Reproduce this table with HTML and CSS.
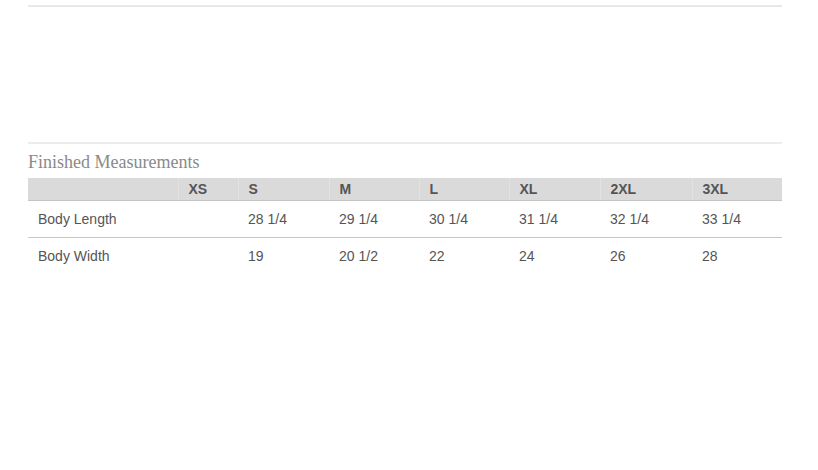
FILE: index.html
```html
<!DOCTYPE html>
<html>
<head>
<meta charset="utf-8">
<link rel="stylesheet" href="styles.css">
</head>
<body>
<div class="page">
  <div class="rule rule-top"></div>
  <div class="rule rule-mid"></div>
  <h2 class="title">Finished Measurements</h2>
  <table class="sizes">
    <colgroup>
      <col class="c-label"><col class="c-xs"><col class="c-s"><col class="c-m"><col class="c-l"><col class="c-xl"><col class="c-2xl"><col class="c-3xl">
    </colgroup>
    <thead>
      <tr><th></th><th>XS</th><th>S</th><th>M</th><th>L</th><th>XL</th><th>2XL</th><th>3XL</th></tr>
    </thead>
    <tbody>
      <tr><td>Body Length</td><td></td><td>28 1/4</td><td>29 1/4</td><td>30 1/4</td><td>31 1/4</td><td>32 1/4</td><td>33 1/4</td></tr>
      <tr><td>Body Width</td><td></td><td>19</td><td>20 1/2</td><td>22</td><td>24</td><td>26</td><td>28</td></tr>
    </tbody>
  </table>
</div>
</body>
</html>
```
FILE: styles.css
```css
html, body {
  margin: 0;
  padding: 0;
  background: #ffffff;
}
.page {
  margin-left: 28px;
  width: 754px;
  font-family: "Liberation Sans", Arial, sans-serif;
}
.rule {
  height: 2px;
  background: #e8e8e8;
}
.rule-top {
  margin-top: 5px;
}
.rule-mid {
  margin-top: 135px;
  background: #ececec;
}
.title {
  margin: 8px 0 6px 0;
  font-family: "Liberation Serif", "Times New Roman", serif;
  font-weight: normal;
  font-size: 18px;
  line-height: 20px;
  color: #8a8a8a;
}
.sizes {
  width: 754px;
  border-collapse: collapse;
  table-layout: fixed;
}
.c-label { width: 150px; }
.c-xs { width: 60px; }
.c-s { width: 91px; }
.c-m { width: 90px; }
.c-l { width: 90px; }
.c-xl { width: 91px; }
.c-2xl { width: 92px; }
.c-3xl { width: 90px; }
.sizes th {
  background: #dadada;
  height: 22px;
  padding: 0 10px;
  text-align: left;
  font-size: 14px;
  font-weight: bold;
  color: #555555;
  border-bottom: 1px solid #c4c4c4;
  border-left: 1px solid #e2e2e2;
}
.sizes th:first-child {
  border-left: none;
}
.sizes td {
  height: 36px;
  padding: 0 10px;
  font-size: 14px;
  color: #555555;
  text-align: left;
}
.sizes tbody tr:first-child td {
  border-bottom: 1px solid #c8c8c8;
}
```
